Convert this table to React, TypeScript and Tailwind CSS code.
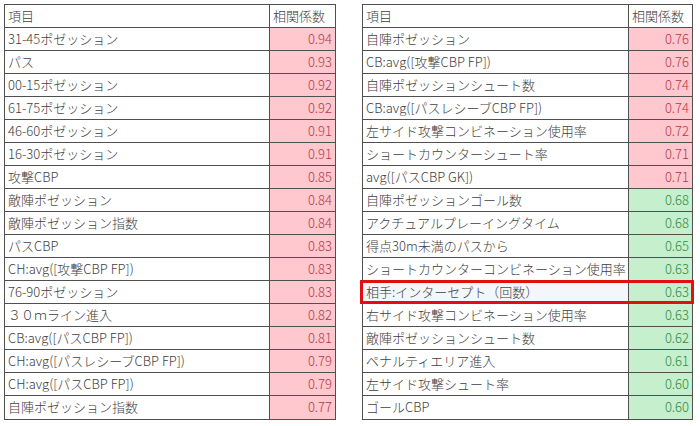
type Row = { label: string; value: string; tone: "red" | "green"; mark?: boolean };

const left: Row[] = [
  { label: "31-45ポゼッション", value: "0.94", tone: "red" },
  { label: "パス", value: "0.93", tone: "red" },
  { label: "00-15ポゼッション", value: "0.92", tone: "red" },
  { label: "61-75ポゼッション", value: "0.92", tone: "red" },
  { label: "46-60ポゼッション", value: "0.91", tone: "red" },
  { label: "16-30ポゼッション", value: "0.91", tone: "red" },
  { label: "攻撃CBP", value: "0.85", tone: "red" },
  { label: "敵陣ポゼッション", value: "0.84", tone: "red" },
  { label: "敵陣ポゼッション指数", value: "0.84", tone: "red" },
  { label: "パスCBP", value: "0.83", tone: "red" },
  { label: "CH:avg([攻撃CBP FP])", value: "0.83", tone: "red" },
  { label: "76-90ポゼッション", value: "0.83", tone: "red" },
  { label: "３０ｍライン進入", value: "0.82", tone: "red" },
  { label: "CB:avg([パスCBP FP])", value: "0.81", tone: "red" },
  { label: "CH:avg([パスレシーブCBP FP])", value: "0.79", tone: "red" },
  { label: "CH:avg([パスCBP FP])", value: "0.79", tone: "red" },
  { label: "自陣ポゼッション指数", value: "0.77", tone: "red" },
];

const right: Row[] = [
  { label: "自陣ポゼッション", value: "0.76", tone: "red" },
  { label: "CB:avg([攻撃CBP FP])", value: "0.76", tone: "red" },
  { label: "自陣ポゼッションシュート数", value: "0.74", tone: "red" },
  { label: "CB:avg([パスレシーブCBP FP])", value: "0.74", tone: "red" },
  { label: "左サイド攻撃コンビネーション使用率", value: "0.72", tone: "red" },
  { label: "ショートカウンターシュート率", value: "0.71", tone: "red" },
  { label: "avg([パスCBP GK])", value: "0.71", tone: "red" },
  { label: "自陣ポゼッションゴール数", value: "0.68", tone: "green" },
  { label: "アクチュアルプレーイングタイム", value: "0.68", tone: "green" },
  { label: "得点30m未満のパスから", value: "0.65", tone: "green" },
  { label: "ショートカウンターコンビネーション使用率", value: "0.63", tone: "green" },
  { label: "相手:インターセプト（回数）", value: "0.63", tone: "green", mark: true },
  { label: "右サイド攻撃コンビネーション使用率", value: "0.63", tone: "green" },
  { label: "敵陣ポゼッションシュート数", value: "0.62", tone: "green" },
  { label: "ペナルティエリア進入", value: "0.61", tone: "green" },
  { label: "左サイド攻撃シュート率", value: "0.60", tone: "green" },
  { label: "ゴールCBP", value: "0.60", tone: "green" },
];

function CorrTable({ rows, numW }: { rows: Row[]; numW: string }) {
  return (
    <div className="border border-[#505050] bg-white">
      <div className="flex h-[23px] border-b border-[#505050]">
        <div className="flex-1 border-r border-[#505050] pl-[3px] leading-[22px]">項目</div>
        <div className={`${numW} pl-[3px] leading-[22px]`}>相関係数</div>
      </div>
      {rows.map((r, i) => (
        <div
          key={r.label}
          className={`relative flex ${i < rows.length - 1 ? "h-[23px] border-b border-[#505050]" : "h-[23px]"}`}
        >
          <div
            className={`flex-1 whitespace-nowrap border-r border-[#505050] pl-[3px] leading-[22px] ${r.mark ? "bg-[#f3f6fa]" : ""}`}
          >
            {r.label}
          </div>
          <div
            className={`${numW} pr-[3px] text-right leading-[22px] ${
              r.tone === "red" ? "bg-[#ffc7ce] text-[#b23a46]" : "bg-[#c6efce] text-[#2e8b3e]"
            }`}
          >
            {r.value}
          </div>
          {r.mark && (
            <div className="pointer-events-none absolute -left-[3px] -right-[2px] -top-[1px] -bottom-[1px] border-[3px] border-[#e01010]" />
          )}
        </div>
      ))}
    </div>
  );
}

export default function App() {
  return (
    <div
      className="flex h-[426px] w-[700px] gap-[26px] bg-white pl-[4px] pt-[4px] text-[13px] font-light text-[#404040]"
      style={{ fontFamily: '"Noto Sans CJK JP", "Noto Sans", sans-serif' }}
    >
      <div className="w-[332px]">
        <CorrTable rows={left} numW="w-[65px]" />
      </div>
      <div className="w-[331px]">
        <CorrTable rows={right} numW="w-[63px]" />
      </div>
    </div>
  );
}
